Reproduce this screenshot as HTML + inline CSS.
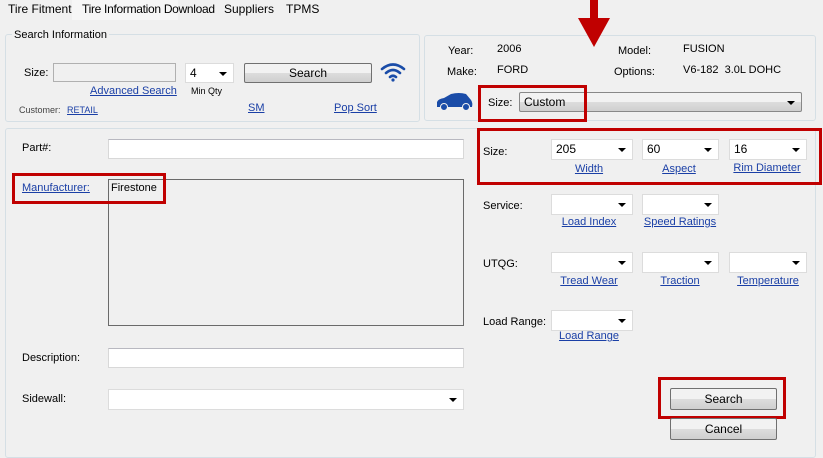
<!DOCTYPE html>
<html><head><meta charset="utf-8"><style>
*{box-sizing:border-box;margin:0;padding:0}
body{width:823px;height:448px;background:#f0f0f0;font-family:"Liberation Sans",sans-serif;font-size:11px;color:#000;position:relative;overflow:hidden}
.a{position:absolute;white-space:nowrap;line-height:14px}
.lk{color:#1a3fa6;text-decoration:underline}
.in{position:absolute;background:#fff;border:1px solid #d8d8d8;border-top-color:#b8b8c0}
.dd{position:absolute;background:#fff;border:1px solid #dcdcdc;padding:2px 4px;line-height:14px;font-size:12px}
.dd:after{content:"";position:absolute;right:6px;top:8px;border-left:4px solid transparent;border-right:4px solid transparent;border-top:4px solid #000}
.btn{position:absolute;border:1px solid #707070;border-radius:2px;background:linear-gradient(#f2f2f2 50%,#dddddd 50%,#cfcfcf);text-align:center;line-height:19px;font-size:12px}
.red{position:absolute;border:3px solid #c00000}
.grp{position:absolute;border:1px solid #d5dfe5;border-radius:3px}
.c{text-align:center;transform:translateX(-50%)}
</style></head><body>
<div style="position:absolute;left:72px;top:0;width:106px;height:20px;background:#f6f6f6"></div>
<div class="a" style="left:8px;top:2px;font-size:12px">Tire Fitment</div>
<div class="a" style="left:82px;top:2px;font-size:12px;letter-spacing:-0.3px">Tire Information Download</div>
<div class="a" style="left:224px;top:2px;font-size:12px">Suppliers</div>
<div class="a" style="left:286px;top:2px;font-size:12px">TPMS</div>

<div class="grp" style="left:5px;top:34px;width:415px;height:88px"></div>
<div class="a" style="left:12px;top:28px;background:#f0f0f0;padding:0 2px">Search Information</div>
<div class="a" style="left:24px;top:66px">Size:</div>
<div class="in" style="left:53px;top:63px;width:123px;height:19px;background:#f0f0f0;border-color:#b0b0b0"></div>
<div class="a lk" style="left:90px;top:84px">Advanced Search</div>
<div class="dd" style="left:185px;top:63px;width:49px;height:20px">4</div>
<div class="a" style="left:191px;top:84px;font-size:9px">Min Qty</div>
<div class="btn" style="left:244px;top:63px;width:128px;height:20px">Search</div>
<svg style="position:absolute;left:380px;top:62px" width="26" height="20" viewBox="0 0 26 20"><g fill="none" stroke="#1a4ca8" stroke-width="2.6" stroke-linecap="round"><path d="M2 7 Q13 -2 24 7"/><path d="M6 11 Q13 5 20 11"/><path d="M10 15 Q13 12.5 16 15"/></g><circle cx="13" cy="18" r="1.6" fill="#1a4ca8"/></svg>
<div class="a" style="left:19px;top:103px;font-size:9px;color:#444">Customer:</div>
<div class="a lk" style="left:67px;top:103px;font-size:9px">RETAIL</div>
<div class="a lk" style="left:248px;top:101px">SM</div>
<div class="a lk" style="left:334px;top:101px">Pop Sort</div>

<div class="grp" style="left:424px;top:35px;width:392px;height:86px"></div>
<div class="a" style="left:448px;top:44px">Year:</div>
<div class="a" style="left:497px;top:42px">2006</div>
<div class="a" style="left:447px;top:65px">Make:</div>
<div class="a" style="left:497px;top:63px">FORD</div>
<div class="a" style="left:618px;top:44px">Model:</div>
<div class="a" style="left:683px;top:42px">FUSION</div>
<div class="a" style="left:614px;top:65px">Options:</div>
<div class="a" style="left:683px;top:63px">V6-182 &nbsp;3.0L DOHC</div>
<svg style="position:absolute;left:435px;top:92px" width="40" height="20" viewBox="0 0 40 20"><path d="M2 15 L2 10 Q3 7 9 6 L16 2 Q24 0 31 2 L36 8 Q38 11 37 15 Z" fill="#1a4ca8"/><circle cx="9" cy="15" r="3.5" fill="#1a4ca8" stroke="#f0f0f0" stroke-width="1"/><circle cx="31" cy="15" r="3.5" fill="#1a4ca8" stroke="#f0f0f0" stroke-width="1"/></svg>
<div class="a" style="left:488px;top:96px">Size:</div>
<div class="btn" style="left:519px;top:92px;width:283px;height:20px;text-align:left;padding-left:4px;border-color:#888">Custom<span style="position:absolute;right:6px;top:8px;border-left:4px solid transparent;border-right:4px solid transparent;border-top:4px solid #000"></span></div>
<div class="red" style="left:478px;top:85px;width:109px;height:37px"></div>
<div style="position:absolute;left:590px;top:0;width:8px;height:19px;background:#c00000"></div>
<div style="position:absolute;left:578px;top:18px;border-left:16px solid transparent;border-right:16px solid transparent;border-top:29px solid #c00000"></div>

<div class="grp" style="left:5px;top:128px;width:811px;height:330px"></div>
<div class="a" style="left:22px;top:141px">Part#:</div>
<div class="in" style="left:108px;top:139px;width:356px;height:20px"></div>
<div class="a lk" style="left:22px;top:181px">Manufacturer:</div>
<div style="position:absolute;left:108px;top:179px;width:356px;height:147px;border:1px solid #6a6a6a"></div>
<div class="a" style="left:111px;top:181px">Firestone</div>
<div class="red" style="left:12px;top:173px;width:154px;height:31px"></div>
<div class="a" style="left:22px;top:351px">Description:</div>
<div class="in" style="left:108px;top:348px;width:356px;height:20px"></div>
<div class="a" style="left:22px;top:392px">Sidewall:</div>
<div class="dd" style="left:108px;top:389px;width:356px;height:21px"></div>

<div class="a" style="left:483px;top:145px">Size:</div>
<div class="dd" style="left:551px;top:139px;width:82px;height:21px">205</div>
<div class="dd" style="left:642px;top:139px;width:77px;height:21px">60</div>
<div class="dd" style="left:729px;top:139px;width:78px;height:21px">16</div>
<div class="a lk c" style="left:589px;top:162px">Width</div>
<div class="a lk c" style="left:679px;top:162px">Aspect</div>
<div class="a lk c" style="left:767px;top:161px">Rim Diameter</div>
<div class="red" style="left:477px;top:128px;width:345px;height:57px"></div>

<div class="a" style="left:483px;top:199px">Service:</div>
<div class="dd" style="left:551px;top:194px;width:82px;height:21px"></div>
<div class="dd" style="left:642px;top:194px;width:77px;height:21px"></div>
<div class="a lk c" style="left:589px;top:215px">Load Index</div>
<div class="a lk c" style="left:680px;top:215px">Speed Ratings</div>

<div class="a" style="left:483px;top:257px">UTQG:</div>
<div class="dd" style="left:551px;top:252px;width:82px;height:21px"></div>
<div class="dd" style="left:642px;top:252px;width:77px;height:21px"></div>
<div class="dd" style="left:729px;top:252px;width:78px;height:21px"></div>
<div class="a lk c" style="left:589px;top:274px">Tread Wear</div>
<div class="a lk c" style="left:680px;top:274px">Traction</div>
<div class="a lk c" style="left:768px;top:274px">Temperature</div>

<div class="a" style="left:483px;top:315px">Load Range:</div>
<div class="dd" style="left:551px;top:310px;width:82px;height:21px"></div>
<div class="a lk c" style="left:589px;top:329px">Load Range</div>

<div class="btn" style="left:670px;top:388px;width:107px;height:22px;line-height:20px">Search</div>
<div class="red" style="left:658px;top:377px;width:128px;height:42px"></div>
<div class="btn" style="left:670px;top:418px;width:107px;height:22px;line-height:20px">Cancel</div>
</body></html>
